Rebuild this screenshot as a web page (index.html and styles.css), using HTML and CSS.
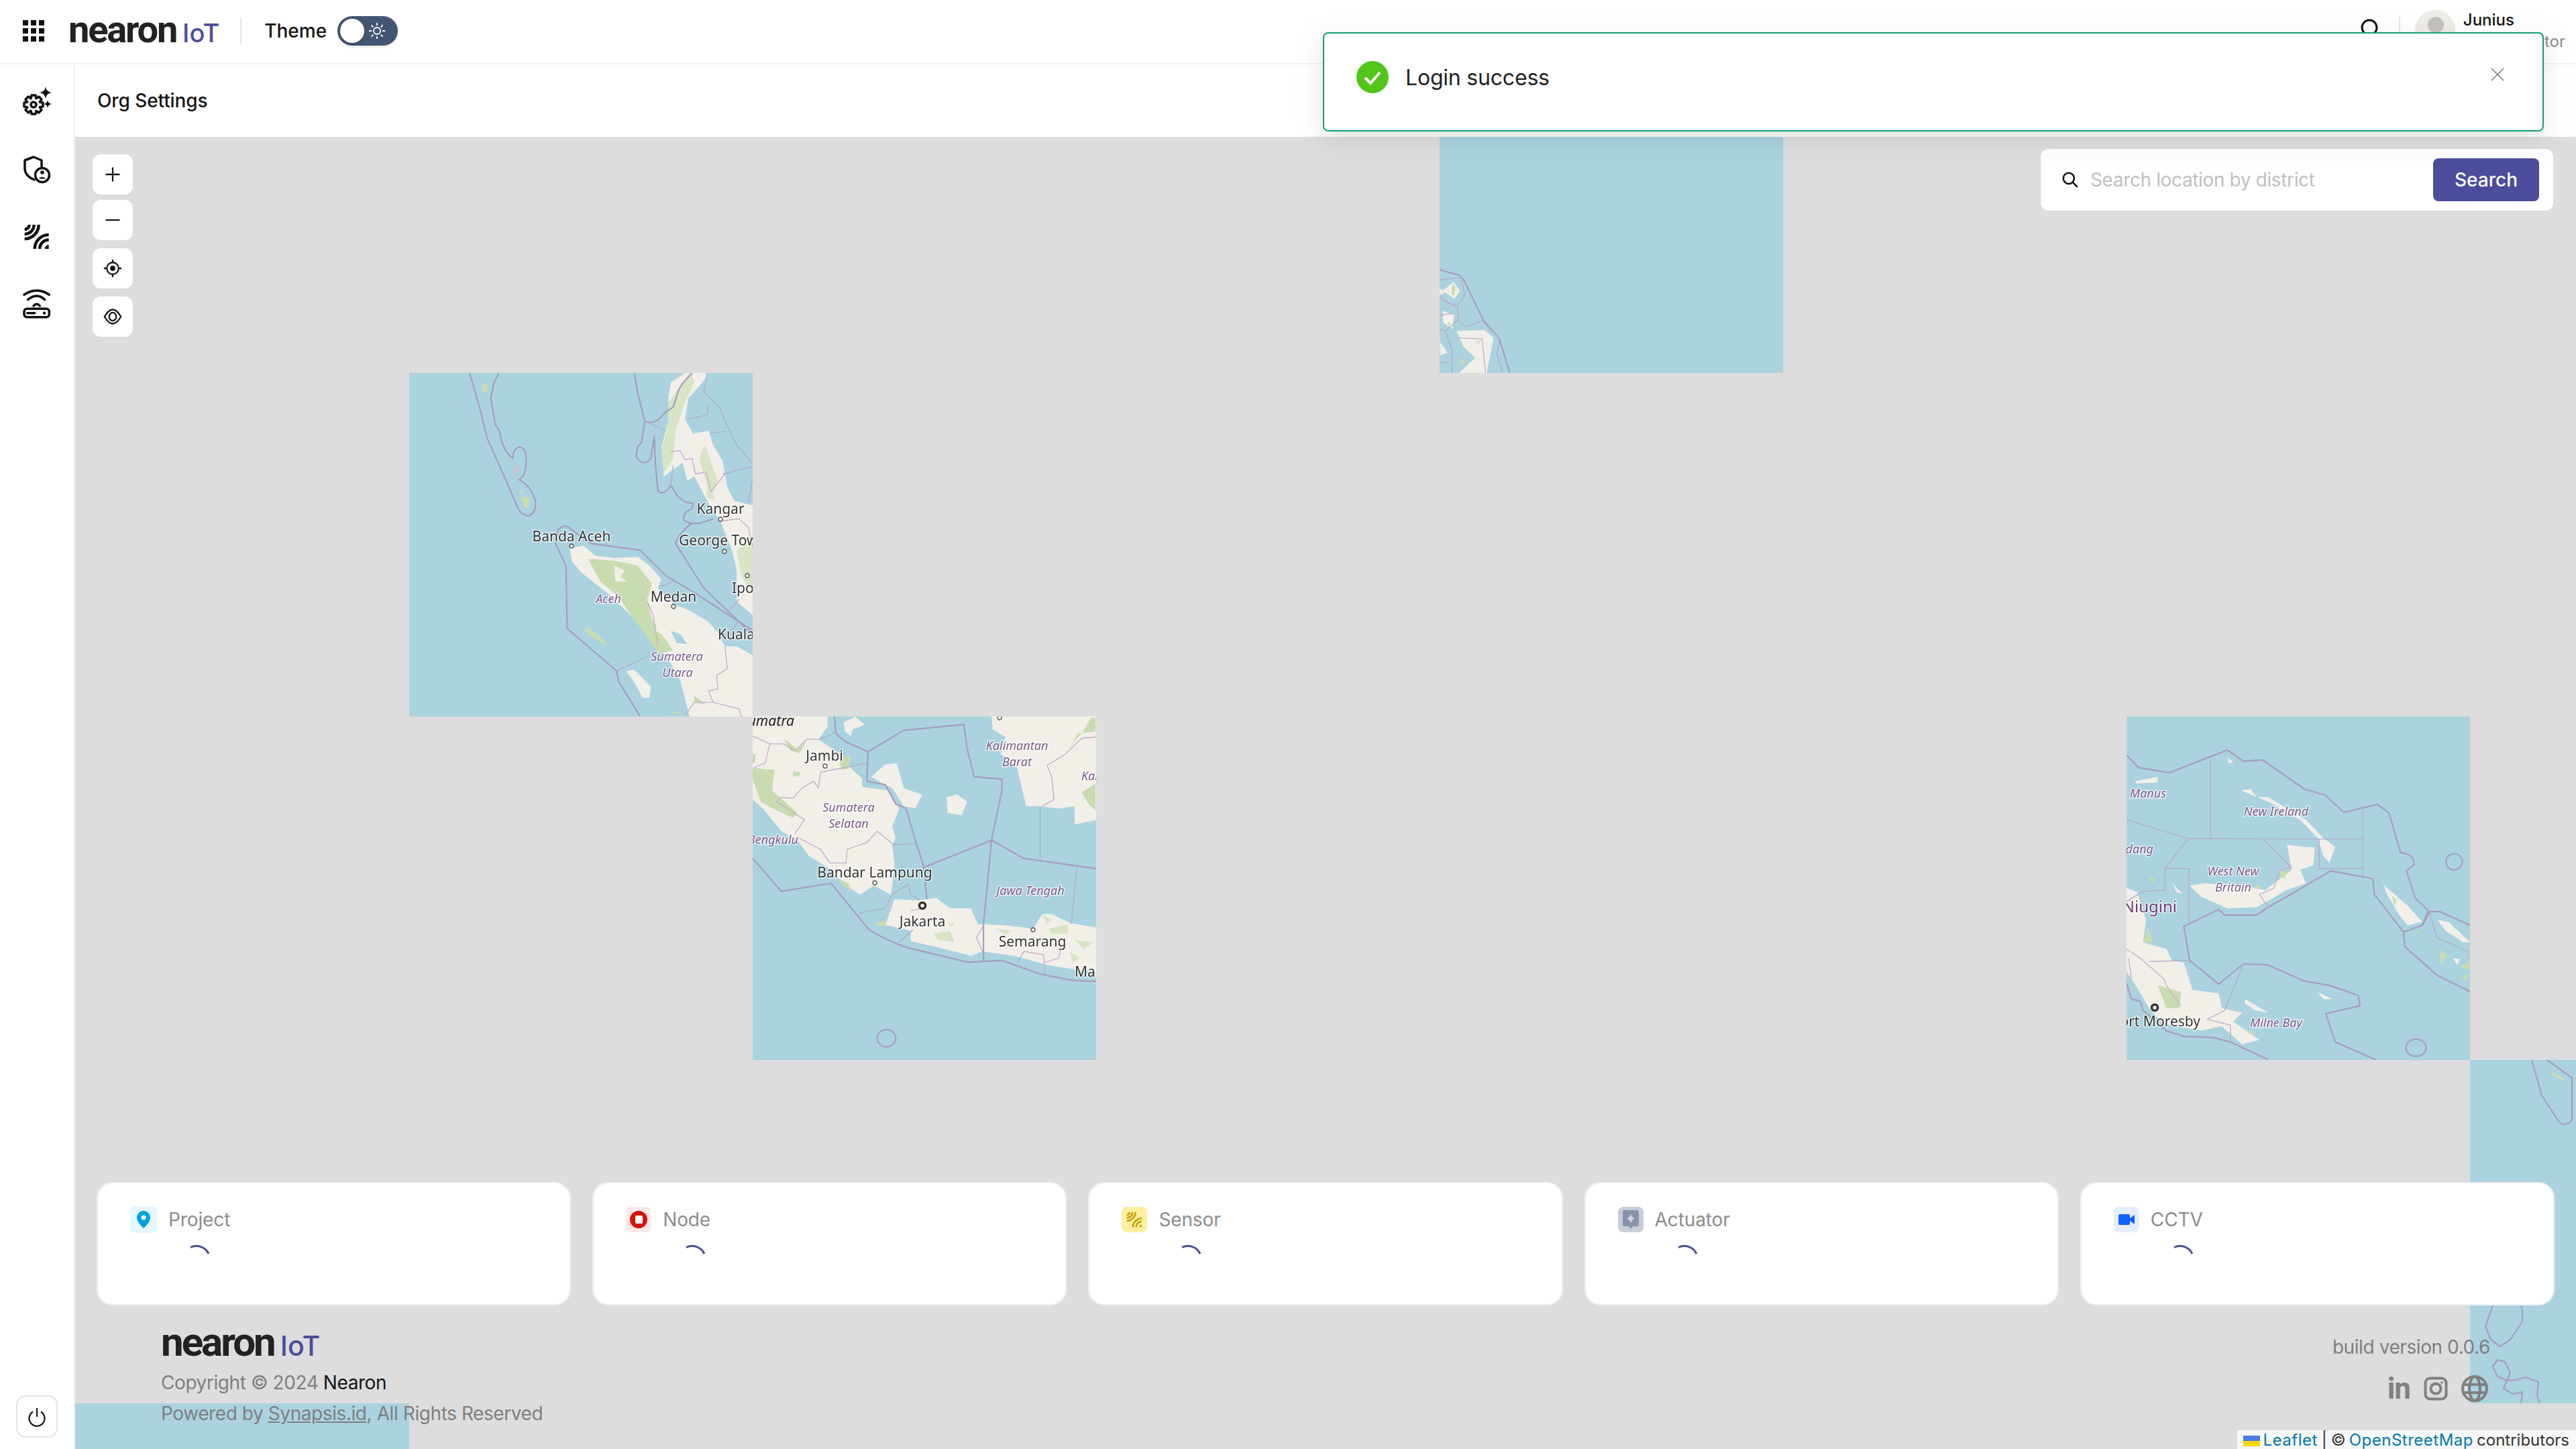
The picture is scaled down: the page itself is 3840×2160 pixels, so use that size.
FILE: index.html
```html
<!DOCTYPE html>
<html lang="en">
<head>
<meta charset="utf-8">
<title>Nearon IoT</title>
<link rel="stylesheet" href="styles.css">
</head>
<body>
<div class="app">
  <header class="topbar">
    <div class="apps"><i></i><i></i><i></i><i></i><i></i><i></i><i></i><i></i><i></i></div>
    <div class="logo"><span class="logo-name">nearon</span><span class="logo-iot">IoT</span></div>
    <span class="vline"></span>
    <span class="theme-label">Theme</span>
    <div class="toggle">
      <span class="knob"></span>
      <svg class="sun" viewBox="0 0 24 24"><circle cx="12" cy="12" r="5"/><path d="M12 0v4M12 20v4M0 12h4M20 12h4M3.500 3.500l2.800 2.800M17.700 17.700l2.800 2.800M3.500 20.500l2.800-2.800M17.700 6.300l2.800-2.800"/></svg>
    </div>
    <div class="user">
      <svg class="top-search" viewBox="0 0 32 32"><circle cx="15" cy="14" r="11"/><path d="M23 22l7 7"/></svg>
      <span class="vline user-line"></span>
      <svg class="avatar" viewBox="0 0 60 60"><circle class="av-bg" cx="30" cy="30" r="30"/><circle class="av-fg" cx="31" cy="22" r="12"/></svg>
      <div class="user-text"><div class="user-name">Junius</div><div class="user-role">Administrator</div></div>
    </div>
  </header>

  <div class="body">
    <aside class="sidebar">
      <nav class="side-nav">
        <a class="side-item"><svg class="side-icon" viewBox="0 0 48 48"><g class="ln" transform="translate(19 27)"><path d="M-3 -14L3 -14L3.830 -9.240L7.780 -12.020L12.020 -7.780L9.240 -3.830L14 -3L14 3L9.240 3.830L12.020 7.780L7.780 12.020L3.830 9.240L3 14L-3 14L-3.830 9.240L-7.780 12.020L-12.020 7.780L-9.240 3.830L-14 3L-14 -3L-9.240 -3.830L-12.020 -7.780L-7.780 -12.020L-3.830 -9.240Z"/><circle r="4"/></g><path class="fl" d="M37 0Q38 8 46 9Q38 10 37 18Q36 10 28 9Q36 8 37 0ZM40 20Q40.700 25.300 46 26Q40.700 26.700 40 32Q39.300 26.700 34 26Q39.300 25.300 40 20Z"/></svg></a>
        <a class="side-item"><svg class="side-icon" viewBox="0 0 48 48"><g class="ln"><path d="M31 19V10L19 5L6 10V22Q6 33 20 39"/><circle cx="32" cy="32" r="10.500"/></g><circle class="fl" cx="32" cy="28" r="2.800"/><path class="fl" d="M26.500 37.500Q32 32 37.500 37.500Z"/></svg></a>
        <a class="side-item"><svg class="side-icon" viewBox="0 0 48 48"><g class="ln ln-wide"><path d="M12.700 6A7 7 0 0 1 5.700 13M19.700 6A14 14 0 0 1 5.700 20M26.700 6A21 21 0 0 1 5.700 27"/><path d="M28.200 42A13.500 13.500 0 0 1 41.700 28.500M20.700 42A21 21 0 0 1 41.700 21"/></g><path class="fl" d="M35.700 42A6 6 0 0 1 41.700 36V42Z"/></svg></a>
        <a class="side-item"><svg class="side-icon" viewBox="0 0 48 48"><g class="ln"><path d="M5 10.300Q24 -2 42.300 10.300M10.700 17.700Q24 6.500 35.700 17.700M19 27Q24 21.500 28.300 27"/><rect x="5" y="31.300" width="37.300" height="12.400" rx="4"/></g><path class="ln" d="M9.700 37.700H20.700"/><circle class="fl" cx="35" cy="37.700" r="2.200"/></svg></a>
      </nav>
      <button class="power"><svg viewBox="0 0 28 28"><path d="M14 1V14M8 6.500A11.500 11.500 0 1 0 20 6.500"/></svg></button>
    </aside>

    <main class="main">
      <div class="page-title">Org Settings</div>
      <section class="map">
        <svg class="tile tile-1" viewBox="0 0 512 512"><g class="soft"><g transform="scale(.351 .3335) translate(-29 -18)">
          <path class="l" d="M710 800L770 790L820 835L900 845L1000 840L1050 880L1100 940L1085 980L1150 1050L1220 1080L1300 1130L1340 1180L1370 1240L1420 1240L1488 1280V1553H1220L1180 1390L1120 1280L1050 1200L1010 1150L960 1090L880 1010L820 960L760 910L720 860Z"/>
          <path class="g" d="M790 850Q900 850 1000 880L1060 960L1040 1030L1060 1120L1150 1260L1090 1270L1040 1200L970 1100L920 1020L840 950Z"/>
          <path class="l" d="M900 880L945 900L925 930L955 950L905 950ZM1080 1140L1130 1150L1110 1190L1075 1170Z"/>
          <path class="w" d="M1140 1170L1180 1185L1210 1230L1165 1225Z"/>
          <path class="l" d="M950 1350L985 1345L1055 1420L1050 1470L1020 1470L985 1400Z"/>
          <path class="g" d="M770 1160L790 1155L870 1225L860 1235L780 1180ZM1240 1460L1290 1500L1240 1490ZM1140 1535L1180 1530L1175 1545Z"/>
          <path class="l" d="M1140 60L1200 18H1290V40L1250 90L1215 130L1200 225L1235 290L1300 275L1320 340L1360 410L1380 530L1410 590L1488 610V1100L1420 1040L1420 900L1400 810L1350 680L1300 600L1240 480L1210 500L1190 420L1110 480L1100 350L1130 230L1130 130Z"/>
          <path class="g g-soft" d="M1230 18L1185 70L1130 150L1125 265L1098 370L1110 470L1150 400L1160 280L1200 150L1240 60ZM1285 340L1340 500L1310 570L1260 400ZM1420 810L1488 760V1000L1440 930ZM1300 500L1330 590L1290 570Z"/>
          <path class="g" d="M340 60L365 70L355 110L338 100ZM505 570L540 575L535 620L515 620ZM500 540L515 550L505 560Z"/>
          <path class="m" d="M430 410L445 425L438 430ZM480 430L495 435L490 465L475 460ZM460 460L475 465L470 472Z"/>
          <path class="b" d="M285 18L300 70L330 180L360 310L420 450L490 620Q510 660 540 655Q570 640 565 590Q545 520 495 495Q525 480 525 420Q530 350 495 350Q470 355 470 400Q440 380 420 320Q415 270 395 250L375 130L390 60L410 18"/>
          <path class="b" d="M985 18L1000 110L1030 235Q1020 290 1015 330Q990 350 995 395Q1020 440 1055 400L1070 300L1075 430L1085 545Q1110 570 1140 520L1170 570Q1200 600 1235 600L1230 625Q1190 640 1195 675Q1215 695 1260 690L1320 670"/>
          <path class="b" d="M1228 690Q1170 740 1160 780L1280 980L1480 1180L1488 1190"/>
          <path class="b" d="M1488 1170L1240 1000L1120 925L1010 810L800 780L720 720Q690 685 660 720L650 780L695 880L700 1160L910 1350L920 1400L1010 1553"/>
          <path class="b" d="M1230 18Q1190 60 1175 90L1150 170L1110 200Q1080 250 1030 235"/>
          <path class="t" d="M1030 235L1120 275M1210 225L1295 205L1300 160M1295 18L1280 100L1345 170L1370 230L1420 340L1488 425M1310 285L1375 280M1140 520L1150 430M1360 470L1488 435M910 1350L1040 1285M1380 1090L1430 1030M1400 1170L1430 1120M1470 600L1488 490M1100 970L1150 950"/>
          <path class="p" d="M1040 1040L1065 1100L1085 1240M1370 1240L1380 1340L1335 1370L1340 1430L1300 1440L1320 1490L1240 1490L1200 1550M1320 1490L1430 1520L1440 1553M1140 370L1180 365L1200 405L1230 400L1245 470L1290 460L1310 550L1370 470M1350 680L1430 670L1470 710L1488 800"/>
        </g>
        <text class="ct" x="242" y="251" text-anchor="middle">Banda Aceh</text><text class="ct" x="464" y="210" text-anchor="middle">Kangar</text><text class="ct" x="402" y="257">George Town</text><text class="ct" x="481" y="328">Ipoh</text><text class="ct" x="394" y="341" text-anchor="middle">Medan</text><text class="ct" x="460" y="397">Kuala Lumpur</text>
        <text class="rg" x="297" y="343" text-anchor="middle">Aceh</text><text class="rg" x="399" y="429" text-anchor="middle">Sumatera</text><text class="rg" x="400" y="453" text-anchor="middle">Utara</text>
        <circle class="dot" cx="242" cy="258" r="3"/><circle class="dot" cx="464" cy="218" r="3"/><circle class="dot" cx="470" cy="266" r="3"/><circle class="dot" cx="504" cy="302" r="3"/><circle class="dot" cx="394" cy="348" r="3"/>
        </g></svg>

        <svg class="tile tile-2" viewBox="0 0 512 512"><g class="soft"><g transform="scale(.3444 .338) translate(-6 -24)">
          <path class="l" d="M6 24H330L330 70L290 125L400 200L430 250L480 300L480 335L590 350L640 430L610 510L625 560L610 590L620 680L605 810L530 770L470 810L400 760L330 690L250 640L200 570L130 530L50 430L6 390Z"/>
          <path class="l" d="M520 290L580 235L630 230L660 340L740 370L710 430L660 420L610 340L570 320ZM845 380L890 368L935 400L910 460L850 450ZM400 50L450 25L490 60L440 80L430 110L405 90Z"/>
          <path class="l" d="M1040 24H1493V480L1400 500L1400 420L1330 430L1250 420L1190 420L1150 250L1080 190L1100 115L1045 80Z"/>
          <path class="l" d="M580 945L620 830L720 835L800 825L860 870L950 870L980 940L1100 945L1220 960L1260 895L1300 895L1380 935L1493 955V1150L1400 1140L1280 1120L1140 1080L1000 1060L950 1080L840 1050L690 1015L690 970L610 950Z"/>
          <path class="g" d="M6 250L100 260L90 350L200 450L180 470L110 440L40 400L6 300ZM140 120L200 170L240 130L210 185L170 175ZM380 200L430 200L420 255L390 260ZM180 265L215 270L205 290L180 285ZM6 190L20 190L15 230L6 230ZM1370 185L1410 100L1490 90V30L1470 30L1430 100L1400 130ZM1430 360L1490 320V440L1460 410ZM520 760L545 750L535 775ZM380 740L420 760L440 800L400 770ZM530 940L585 920L575 950Z"/>
          <path class="g g-soft" d="M790 980L860 970L880 1020L810 1010ZM1060 960L1130 970L1100 985ZM1260 900L1300 920L1280 940ZM1290 960L1370 940L1370 980L1300 985ZM1400 1010L1480 1020L1440 1050ZM1380 1060L1420 1090L1390 1110ZM850 940L880 935L870 950Z"/>
          <path class="b" d="M360 24L365 95Q390 130 430 145L505 180L660 85L920 60L935 170L965 290L1085 300L1085 350L1040 570L1005 940L1005 1100"/>
          <path class="b" d="M505 180L500 310L580 325L625 410L670 430L710 570L745 680L760 830"/>
          <path class="b" d="M745 690L1040 570L1180 650L1493 695"/>
          <path class="t" d="M1250 420L1250 655M1410 685L1385 940M610 590L710 585M300 125L360 95M300 270L500 230"/>
          <path class="b" d="M6 650L130 795L345 760L510 965Q600 1020 680 1045L940 1108L1085 1100L1250 1160L1390 1188L1493 1192"/>
          <path class="t" d="M465 890L580 870L610 810L680 765L690 810L730 835M640 1020L700 965M1150 1115L1180 1060M1270 1130V1160"/>
          <ellipse class="b" cx="585" cy="1443" rx="40" ry="38"/>
          <path class="p" d="M6 110L80 145L60 230L10 250M80 145L140 145L190 175L240 125L300 125M300 270L290 340L270 310L220 340L180 385L130 380L110 400M110 400L230 480L190 540M205 560L300 610L340 670L410 670L415 610L500 580L545 530L610 585M1280 240L1300 290L1310 390L1260 420M1280 240L1360 190L1430 120L1493 115M1005 945L975 1000L1000 1060M1180 1060L1265 1075L1270 1130M1265 1110L1330 1090L1340 1050M690 880L740 870"/>
        </g>
        <text class="sm" x="62" y="14" text-anchor="end">Sumatra</text>
        <text class="ct" x="107" y="66" text-anchor="middle">Jambi</text><text class="ct" x="182" y="240" text-anchor="middle">Bandar Lampung</text><text class="ct" x="253" y="313" text-anchor="middle">Jakarta</text><text class="ct" x="417" y="343" text-anchor="middle">Semarang</text><text class="ct" x="480" y="388">Malang</text>
        <text class="rg" x="394" y="50" text-anchor="middle">Kalimantan</text><text class="rg" x="394" y="74" text-anchor="middle">Barat</text><text class="rg" x="490" y="95">Kalimantan</text><text class="rg" x="143" y="142" text-anchor="middle">Sumatera</text><text class="rg" x="143" y="166" text-anchor="middle">Selatan</text><text class="rg" x="68" y="190" text-anchor="end">Bengkulu</text><text class="rg" x="414" y="266" text-anchor="middle">Jawa Tengah</text>
        <circle class="dot" cx="108" cy="74" r="3"/><circle class="dot" cx="182" cy="248" r="3"/><circle class="dot" cx="418" cy="318" r="3"/><circle class="dot" cx="368" cy="2" r="3"/><circle class="capital" cx="253" cy="282" r="4.500"/>
        </g></svg>

        <svg class="tile tile-3" viewBox="0 0 512 512"><g class="soft"><g transform="translate(0 156.300) scale(.3444 .3333) translate(-46 0)">
          <path class="l" d="M60 700L105 660L135 700L110 735ZM120 880L240 875L280 910L250 1067H130L200 1000L150 950ZM46 925L80 975L50 990ZM60 790L110 810L100 870L60 840ZM46 690L75 705L46 720Z"/>
          <path class="g" d="M100 670L115 680L110 720L98 715ZM200 925L225 925L215 935ZM80 840L95 845L85 855ZM135 1000L160 1020L140 1030Z"/>
          <path class="b" d="M46 605L130 630L150 650L235 830L305 915L350 1067"/>
          <path class="t" d="M46 650L140 640L155 720L130 760L100 760L60 740L46 720M60 740L125 775L125 830L160 860L230 835L305 915L295 990L320 1067M125 830L70 880L46 870M70 880L100 960L100 1067M46 1020L90 1020"/>
          <path class="p" d="M130 910L230 915L245 1067M46 810L100 800"/>
        </g></g></svg>

        <svg class="tile tile-4" viewBox="0 0 512 512"><g class="soft"><g transform="scale(.4337 .338) translate(-23 -24)">
          <path class="l" d="M240 770L290 760L430 770L500 790L590 700L575 590L640 600L670 600L665 680L620 700L640 760L570 790L520 830L470 865L370 870L280 820Z"/>
          <path class="l" d="M415 350L450 345L470 380L510 380L640 480L700 560L740 600L720 670L700 640L680 560L620 480L510 400Z"/>
          <path class="l" d="M50 310L130 290L130 315L60 320ZM895 710L910 770L990 860L1040 930L990 945L960 900L915 800ZM1090 920L1130 930L1204 1020L1180 1020L1120 970ZM180 760L215 805L195 800ZM430 1270L510 1330L465 1320L430 1290ZM680 1240L730 1270L700 1270ZM1145 1090L1170 1095L1160 1120ZM370 205L390 225L375 230Z"/>
          <path class="l" d="M23 780L60 800L90 920L80 1020L160 1050L180 1100L220 1110L250 1230L340 1245L350 1310L420 1330L390 1370L480 1450L420 1470L350 1390L280 1410L150 1380L100 1310L50 1200L23 1150Z"/>
          <path class="g" d="M95 955L115 1020H80ZM130 1210L210 1240L205 1310H160ZM550 700L575 710L565 740L550 730ZM470 765L490 780L465 785ZM935 815L950 830L945 860ZM1100 1050L1125 1080L1105 1120ZM1170 1130L1204 1100V1140ZM1175 1165L1195 1165L1185 1195ZM100 730L125 745L110 755ZM1010 970L1030 975L1020 985ZM440 1410L470 1415L445 1425ZM75 825L95 835L85 840Z"/>
          <path class="b" d="M23 195L65 250L170 272L370 172L425 222L490 215L635 345L705 370L770 447L885 412L925 450L965 625Q1015 630 1010 680L985 705L1015 825L1060 880L1040 945L975 975L930 900L875 810L870 740L725 705L600 800L510 865L470 900L360 900L340 875L220 950L240 1100L340 1205L425 1115L510 1120L630 1190L720 1210L820 1255L825 1300L708 1335L740 1460L880 1538"/>
          <path class="b" d="M1040 945L1065 885L1100 885L1204 945M975 975L980 1040L1090 1165L1204 1238M23 1200L40 1270L70 1280L80 1320L160 1410L220 1435L320 1440L380 1460L510 1538"/>
          <path class="t" d="M23 480L235 563L835 565M312 205L312 563M235 563L155 695L155 790L80 795L23 840M155 695L238 695L238 945M490 565L590 690M685 565L685 695L835 695L835 430M835 695L835 730M425 1115L360 1320M240 1100L100 1105M1065 890L1090 1000L1204 1065"/>
          <path class="p" d="M23 1050L70 1090L150 1180L160 1210L210 1300M360 1320L300 1360L380 1385L380 1460M590 690L550 700L530 780L480 810L510 865M30 1090L40 1180"/>
          <ellipse class="b" cx="1149" cy="665" rx="28" ry="36"/>
          <ellipse class="b" cx="1018" cy="1485" rx="35" ry="38"/>
        </g>
        <text class="rg" x="5" y="121">Manus</text><text class="rg" x="223" y="148" text-anchor="middle">New Ireland</text><text class="rg" x="40" y="204" text-anchor="end">Madang</text><text class="rg" x="159" y="237" text-anchor="middle">West New</text><text class="rg" x="159" y="261" text-anchor="middle">Britain</text><text class="rg" x="223" y="463" text-anchor="middle">Milne Bay</text>
        <text class="co" x="75" y="292" text-anchor="end">Papua Niugini</text>
        <text class="ct" x="110" y="462" text-anchor="end">Port Moresby</text>
        <circle class="capital" cx="42" cy="434" r="4.500"/>
        </g></svg>

        <svg class="tile tile-5" viewBox="0 0 512 512"><g class="soft">
          <path class="g" d="M113 14L122 18L135 24L143 32L130 27Z"/>
          <path class="b" d="M92 0L107 53L133 93Q142 100 152 90L152 27L115 0"/>
          <path class="b" d="M34 366L23 397L31 417L45 427L60 417L78 390V373L76 366"/>
          <path class="b" d="M41 447L34 457L41 472L55 478L50 490L64 498L78 495L76 512M55 478L69 477L83 473L102 480L100 500L104 512M41 447L52 450L60 467L55 478"/>
        </g></svg>

        <div class="tile tile-6"></div>

        <div class="controls">
          <div class="ctl-pair">
            <button class="ctl"><svg viewBox="0 0 32 32"><path d="M16 4V28M4 16H28"/></svg></button>
            <button class="ctl"><svg viewBox="0 0 32 32"><path d="M4 16H28"/></svg></button>
          </div>
          <button class="ctl"><svg viewBox="0 0 32 32"><circle cx="16" cy="16" r="10"/><circle class="ctl-fill" cx="16" cy="16" r="4.500"/><path d="M16 1V6M16 26V31M1 16H6M26 16H31"/></svg></button>
          <button class="ctl"><svg viewBox="0 0 32 32"><path d="M2 16Q9 4 16 4Q23 4 30 16Q23 28 16 28Q9 28 2 16Z"/><ellipse cx="16" cy="16" rx="6" ry="7"/></svg></button>
        </div>

        <form class="search">
          <svg class="search-ico" viewBox="0 0 24 24"><circle cx="10" cy="10" r="7.500"/><path d="M15.500 15.500L22 22"/></svg>
          <span class="search-ph">Search location by district</span>
          <button class="search-btn" type="button">Search</button>
        </form>

        <div class="overlay">
          <div class="cards">
            <article class="card">
              <div class="card-head"><span class="badge badge-project"><svg viewBox="0 0 20 26"><path class="pin" d="M10 0C4.500 0 0 4.500 0 10C0 16 6 22 10 26C14 22 20 16 20 10C20 4.500 15.500 0 10 0Z"/><circle class="hole" cx="10" cy="10" r="3.500"/></svg></span><span class="card-label">Project</span></div>
              <svg class="spin" viewBox="0 0 29 14"><path d="M1 3.500A20 20 0 0 1 28 13"/></svg>
            </article>
            <article class="card">
              <div class="card-head"><span class="badge badge-node"><svg viewBox="0 0 26 26"><circle class="red" cx="13" cy="13" r="13"/><rect class="hole" x="8" y="7" width="11" height="12" rx="2"/></svg></span><span class="card-label">Node</span></div>
              <svg class="spin" viewBox="0 0 29 14"><path d="M1 3.500A20 20 0 0 1 28 13"/></svg>
            </article>
            <article class="card">
              <div class="card-head"><span class="badge badge-sensor"><svg viewBox="0 0 48 48"><g class="amber"><path d="M12.700 6A7 7 0 0 1 5.700 13M19.700 6A14 14 0 0 1 5.700 20M26.700 6A21 21 0 0 1 5.700 27"/><path d="M28.200 42A13.500 13.500 0 0 1 41.700 28.500M20.700 42A21 21 0 0 1 41.700 21"/></g><path class="amber-fill" d="M35.700 42A6 6 0 0 1 41.700 36V42Z"/></svg></span><span class="card-label">Sensor</span></div>
              <svg class="spin" viewBox="0 0 29 14"><path d="M1 3.500A20 20 0 0 1 28 13"/></svg>
            </article>
            <article class="card">
              <div class="card-head"><span class="badge badge-actuator"><svg viewBox="0 0 24 28"><path class="slate" d="M2 0H22A2 2 0 0 1 24 2V22A2 2 0 0 1 22 24H15L12 28L9 24H2A2 2 0 0 1 0 22V2A2 2 0 0 1 2 0Z"/><path class="star" d="M12 5Q13 11 18 12.500Q13 14 12 20Q11 14 6 12.500Q11 11 12 5Z"/></svg></span><span class="card-label">Actuator</span></div>
              <svg class="spin" viewBox="0 0 29 14"><path d="M1 3.500A20 20 0 0 1 28 13"/></svg>
            </article>
            <article class="card">
              <div class="card-head"><span class="badge badge-cctv"><svg viewBox="0 0 24 16"><rect class="blue" width="17" height="16" rx="2"/><path class="blue" d="M17 6L24 1V15L17 10Z"/></svg></span><span class="card-label">CCTV</span></div>
              <svg class="spin" viewBox="0 0 29 14"><path d="M1 3.500A20 20 0 0 1 28 13"/></svg>
            </article>
          </div>
          <footer class="footer">
            <div class="foot-left">
              <div class="logo logo-foot"><span class="logo-name">nearon</span><span class="logo-iot">IoT</span></div>
              <p class="foot-line">Copyright © 2024 <b class="foot-brand">Nearon</b></p>
              <p class="foot-line">Powered by <u>Synapsis.id,</u> All Rights Reserved</p>
            </div>
            <div class="foot-right">
              <div class="build">build version 0.0.6</div>
              <div class="socials">
                <span class="linkedin">in</span>
                <svg class="insta" viewBox="0 0 36 36"><rect x="2.500" y="2.500" width="31" height="31" rx="7"/><circle cx="18" cy="18" r="7.500"/><circle class="soc-fill" cx="27" cy="9" r="1.800"/></svg>
                <svg class="globe" viewBox="0 0 40 40"><circle cx="20" cy="20" r="18"/><ellipse cx="20" cy="20" rx="8" ry="18"/><path d="M3 14H37M3 26H37"/></svg>
              </div>
            </div>
          </footer>
        </div>

        <div class="attribution"><svg class="flag" viewBox="0 0 25 16"><rect class="flag-b" width="25" height="8"/><rect class="flag-y" y="8" width="25" height="8"/></svg><a>Leaflet</a><span class="sep">|</span><span>©</span><a>OpenStreetMap</a><span>contributors</span></div>
      </section>
    </main>
  </div>

  <div class="toast">
    <svg class="toast-ok" viewBox="0 0 48 48"><circle cx="24" cy="24" r="24"/><path d="M13 25L21 33L35 17"/></svg>
    <span class="toast-text">Login success</span>
    <svg class="toast-x" viewBox="0 0 24 24"><path d="M2 2L22 22M22 2L2 22"/></svg>
  </div>
</div>
</body>
</html>
```
FILE: styles.css
```css
* { box-sizing: border-box; }
html, body { margin: 0; width: 100%; height: 100%; overflow: hidden; background: #fff; }
body { font-family: Inter, "Liberation Sans", sans-serif; color: #141414; font-size: 28px; }
p { margin: 0; }
button { padding: 0; border: 0; background: none; font: inherit; }
.app { position: relative; width: 3840px; height: 2160px; display: flex; flex-direction: column; }

/* top bar */
.topbar { flex: 0 0 96px; display: flex; align-items: center; padding: 0 16px 2px 34px; border-bottom: 2px solid #f0f0f0; background: #fff; }
.apps { display: grid; grid-template-columns: repeat(3, 8px); grid-auto-rows: 8px; gap: 4px; }
.apps i { background: #111; display: block; }
.logo { display: flex; align-items: baseline; margin-left: 36px; margin-top: -5px; height: 46px; line-height: 46px; }
.logo-name { font-family: Roboto, sans-serif; font-weight: 700; font-size: 56px; letter-spacing: -2.200px; color: #222; }
.logo-iot { font-family: Inter, sans-serif; font-weight: 500; font-size: 38px; margin-left: 9px; color: #4c4d9c; }
.vline { width: 2px; height: 40px; background: #e4e4e4; margin-left: 31px; }
.theme-label { margin-left: 34px; font-weight: 500; font-size: 28px; }
.toggle { position: relative; margin-left: 16px; width: 90px; height: 44px; border-radius: 22px; background: #445573; box-shadow: 0 2px 4px rgba(0,0,0,.12); display: flex; align-items: center; padding-left: 4px; }
.knob { width: 36px; height: 36px; border-radius: 50%; background: #fff; box-shadow: 0 2px 4px rgba(0,0,0,.2); }
.sun { width: 24px; height: 24px; margin-left: 7px; fill: none; stroke: #fff; stroke-width: 1.800; }
.user { margin-left: auto; display: flex; align-items: center; }
.top-search { width: 32px; height: 32px; fill: none; stroke: #111; stroke-width: 3; margin-top: -6px; }
.user-line { margin-left: 27px; margin-top: -2px; }
.avatar { width: 60px; height: 60px; margin-left: 22px; margin-top: -2px; }
.av-bg { fill: #eeece6; }
.av-fg { fill: #c4c2bc; }
.user-text { margin-left: 12px; font-size: 24px; line-height: 32px; }
.user-name { font-weight: 500; }
.user-role { color: #8c8c8c; }

/* body and sidebar */
.body { flex: 1; display: flex; min-height: 0; }
.sidebar { flex: 0 0 112px; border-right: 2px solid #f0f0f0; display: flex; flex-direction: column; align-items: center; justify-content: space-between; padding: 7px 0 17px; background: #fff; }
.side-nav { display: flex; flex-direction: column; }
.side-item { height: 100px; width: 48px; display: flex; align-items: center; }
.side-icon { width: 48px; height: 48px; overflow: visible; }
.ln { fill: none; stroke: #111; stroke-width: 3.500; stroke-linejoin: round; stroke-linecap: round; }
.ln-wide { stroke-width: 4.500; stroke-linecap: butt; }
.fl { fill: #111; }
.power { width: 62px; height: 63px; border: 2px solid #e3e3e3; border-radius: 14px; background: #fff; display: flex; align-items: center; justify-content: center; }
.power svg { width: 28px; height: 28px; fill: none; stroke: #141414; stroke-width: 2.200; overflow: visible; }

/* main */
.main { flex: 1; min-width: 0; display: flex; flex-direction: column; }
.page-title { flex: 0 0 108px; display: flex; align-items: center; padding: 0 0 0 33px; font-weight: 500; font-size: 28px; letter-spacing: -.1px; background: #fff; }
.map { position: relative; flex: 1; min-height: 0; overflow: hidden; background: #ddd; }

/* tiles */
.tile { position: absolute; width: 512px; height: 512px; background: #aad3df; }
.tile-1 { left: 498px; top: 352px; }
.tile-2 { left: 1010px; top: 864px; }
.tile-3 { left: 2034px; top: -160px; }
.tile-4 { left: 3058px; top: 864px; }
.tile-5 { left: 3570px; top: 1376px; }
.tile-6 { left: -14px; top: 1888px; }
.soft { filter: blur(.75px); }
.l { fill: #f2efe9; }
.g { fill: #c8dcb0; }
.g-soft { opacity: .6; }
.w { fill: #aad3df; }
.m { fill: #cfc3d3; }
.b, .t, .p { fill: none; vector-effect: non-scaling-stroke; stroke-linejoin: round; }
.b { stroke: #a59dbd; stroke-width: 2.200; }
.t { stroke: #b3adc9; stroke-width: 1.400; }
.p { stroke: #c8aec8; stroke-width: 1.400; }
.ct, .rg, .sm, .co { font-family: "Noto Sans", sans-serif; paint-order: stroke; stroke: rgba(255,255,255,.72); stroke-width: 3px; stroke-linejoin: round; }
.ct { font-size: 21px; fill: #333; }
.rg { font-size: 18px; font-style: italic; fill: #7b5a86; }
.sm { font-size: 21px; font-style: italic; fill: #222; stroke-width: 0; }
.co { font-size: 24px; fill: #6e3b72; }
.dot { fill: #fff; stroke: #555; stroke-width: 1.300; }
.capital { fill: #fff; stroke: #333; stroke-width: 3.500; }

/* map controls */
.controls { position: absolute; left: 26px; top: 26px; display: flex; flex-direction: column; gap: 12px; }
.ctl-pair { display: flex; flex-direction: column; gap: 8px; }
.ctl { width: 60px; height: 60px; border-radius: 12px; background: #fff; display: flex; align-items: center; justify-content: center; }
.ctl svg { width: 28px; height: 28px; fill: none; stroke: #141414; stroke-width: 2.600; }
.ctl .ctl-fill { fill: #141414; stroke: none; }
.search { position: absolute; right: 34px; top: 18px; width: 764px; height: 92px; padding: 0 21px 0 31px; border-radius: 12px; background: #fff; display: flex; align-items: center; }
.search-ico { width: 26px; height: 26px; fill: none; stroke: #141414; stroke-width: 2.400; }
.search-ph { flex: 1; margin-left: 17px; color: #bfbfbf; font-size: 28px; letter-spacing: -.37px; }
.search-btn { width: 158px; height: 64px; border-radius: 8px; background: #4c4d9c; color: #fff; font-weight: 500; font-size: 28px; }

/* overlay cards and footer */
.overlay { position: absolute; left: 0; right: 0; bottom: 0; padding: 0 32px 30px; }
.cards { display: grid; grid-template-columns: repeat(5, 1fr); gap: 32px; }
.card { height: 184px; padding: 34px 48px 0; border: 2px solid #efefef; border-radius: 24px; background: #fff; }
.card-head { display: flex; align-items: center; gap: 17px; height: 40px; }
.card-label { color: #8c8c8c; font-size: 28px; letter-spacing: -.12px; }
.badge { width: 38px; height: 38px; border-radius: 8px; display: flex; align-items: center; justify-content: center; }
.badge-project { width: 40px; height: 40px; background: #e6f7ff; }
.badge-project svg { width: 20px; height: 26px; }
.pin { fill: #00a3e0; }
.hole { fill: #fff; }
.badge-node { background: #ffe8e6; }
.badge-node svg { width: 26px; height: 26px; }
.red { fill: #d4140a; }
.badge-sensor { background: #fdf0a0; }
.badge-sensor svg { width: 30px; height: 30px; }
.amber { fill: none; stroke: #c9a000; stroke-width: 4.500; }
.amber-fill { fill: #c9a000; }
.badge-actuator { background: #c8ced8; }
.badge-actuator svg { width: 24px; height: 28px; }
.slate { fill: #8795ab; }
.star { fill: #d5dae2; }
.badge-cctv { background: #e6edff; }
.badge-cctv svg { width: 24px; height: 16px; }
.blue { fill: #0f62fe; }
.spin { display: block; width: 29px; height: 14px; margin: 18px 0 0 89px; fill: none; stroke: #4c4d9c; stroke-width: 3; overflow: visible; }

.footer { display: flex; justify-content: space-between; padding: 36px 96px 0; color: #7f7f7f; font-size: 28px; letter-spacing: -.42px; }
.logo-foot { margin-left: 0; margin-top: 0; height: 56px; line-height: 38px; letter-spacing: 0; }
.logo-foot .logo-name { font-size: 60px; letter-spacing: -3px; }
.logo-foot .logo-iot { font-size: 41px; margin-left: 9px; }
.foot-left { display: flex; flex-direction: column; }
.foot-line { line-height: 46px; }
.foot-brand { font-weight: 400; color: #141414; }
.foot-right { display: flex; flex-direction: column; align-items: flex-end; padding-top: 6px; }
.build { line-height: 40px; }
.socials { margin-top: 22px; display: flex; align-items: center; gap: 20px; height: 40px; padding-right: 3px; }
.linkedin { font-family: Roboto, sans-serif; font-weight: 700; font-size: 44px; line-height: 40px; color: #808080; letter-spacing: -1px; }
.insta, .globe { fill: none; stroke: #808080; stroke-width: 4; }
.insta { width: 36px; height: 36px; }
.globe { width: 40px; height: 40px; }
.soc-fill { fill: #808080; stroke: none; }

.attribution { position: absolute; right: 0; bottom: 0; height: 28px; padding: 0 10px 0 9px; background: #f8f8f8; display: flex; align-items: center; gap: 5px; font-size: 24px; color: #333; white-space: nowrap; }
.attribution a { color: #0078a8; letter-spacing: .5px; }
.flag { width: 25px; height: 16px; margin-top: 4px; }
.flag-b { fill: #4c7be1; }
.flag-y { fill: #ffd500; }
.sep { margin: 0 1px; }

/* toast */
.toast { position: absolute; left: 1972px; top: 48px; width: 1820px; height: 148px; padding: 0 48px 14px; border: 2px solid #13a073; border-radius: 8px; background: #fff; display: flex; align-items: center; gap: 25px; box-shadow: 0 6px 16px -8px rgba(0,0,0,.08), 0 9px 28px 0 rgba(0,0,0,.05), 0 12px 48px 16px rgba(0,0,0,.03); }
.toast-ok { width: 48px; height: 48px; }
.toast-ok circle { fill: #52c41a; }
.toast-ok path { fill: none; stroke: #fff; stroke-width: 4; }
.toast-text { font-size: 32px; letter-spacing: -.2px; color: #1f1f1f; }
.toast-x { margin-left: auto; margin-right: 8px; margin-bottom: 8px; width: 22px; height: 22px; fill: none; stroke: #8c8c8c; stroke-width: 2; }
```
